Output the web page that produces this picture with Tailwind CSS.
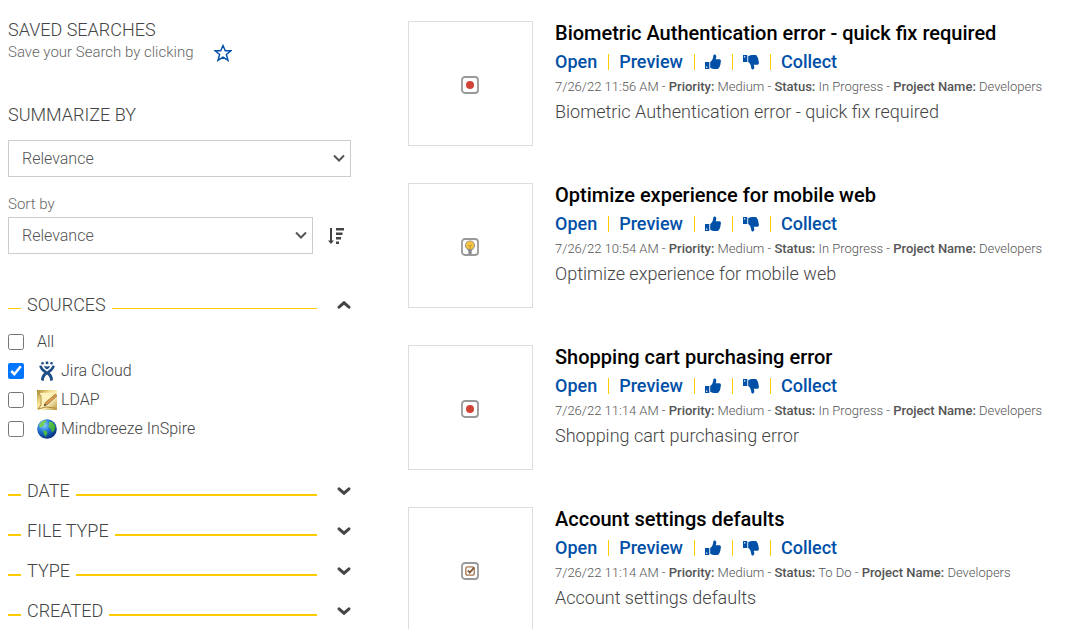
<!DOCTYPE html>
<html lang="en">
  <head>
    <meta charset="UTF-8" />
    <meta name="viewport" content="width=device-width, initial-scale=1.0" />
    <title>Search Results</title>
    <script src="https://cdn.jsdelivr.net/npm/@tailwindcss/browser@4"></script>
  </head>
  <body class="h-screen overflow-hidden bg-white font-['Roboto',sans-serif] font-light text-[#444]">
    <!-- Shared icons -->
    <svg class="hidden" aria-hidden="true">
      <symbol id="thumb" viewBox="0 0 16 16">
        <path fill-rule="evenodd" d="M0 8h4.300v7H0zM1 12.500v1.300h1.300v-1.300z" />
        <path d="M5.200 8C7 7.200 8 4.500 8.200 2.500 8.300.8 9 .3 10 .5c1.800.5 1.500 3 .7 4.800h3.800q1.500.2 1.400 1.700.1 1.200-.4 2 .2 1.500-.5 2.500 0 1.500-1 2.100-.2 1.400-1.500 1.400H9q-1.500 0-3.800-1.200z" />
      </symbol>
      <symbol id="chevron" viewBox="0 0 14 16">
        <path d="M2 5.800l5 4.400 5-4.400" fill="none" stroke="#444" stroke-width="2.900" stroke-linecap="round" />
      </symbol>
      <symbol id="arrow" viewBox="0 0 12 12">
        <path d="M1 3.500l5 5 5-5" fill="none" stroke="#555" stroke-width="2" />
      </symbol>
      <symbol id="bug" viewBox="0 0 18 18">
        <rect x="1" y="1" width="16" height="16" rx="3" fill="#fff" stroke="#999" stroke-width="1.8" />
        <circle cx="9" cy="9" r="4" fill="#d04437" />
      </symbol>
      <symbol id="idea" viewBox="0 0 18 18">
        <rect x="1" y="1" width="16" height="16" rx="3" fill="#fff" stroke="#999" stroke-width="1.8" />
        <path d="M9 2.400a5 5 0 0 0-3 8.900l1.400 1.400V16h3.200v-3.300l1.400-1.400A5 5 0 0 0 9 2.400z" fill="#888" />
        <circle cx="9" cy="7.300" r="4" fill="#f6c342" />
        <path d="M7.300 7.300h.9l.8 1 .8-1h.9M9 8.300v2.600" fill="none" stroke="#b8872a" stroke-width=".8" />
      </symbol>
      <symbol id="task" viewBox="0 0 18 18">
        <rect x="1" y="1" width="16" height="16" rx="3" fill="#fff" stroke="#999" stroke-width="1.8" />
        <rect x="4.800" y="4.800" width="8.400" height="8.400" rx="2" fill="none" stroke="#a5754e" stroke-width="1.300" />
        <path d="M6.800 8.400l2 2.200 4.400-5.200" fill="none" stroke="#815b3a" stroke-width="1.700" />
      </symbol>
    </svg>

    <div class="flex">
      <!-- Sidebar -->
      <aside class="w-1/3 px-2 pt-[18px]">
        <h2 class="text-lg leading-6">SAVED SEARCHES</h2>
        <div class="flex items-center gap-5 text-[15px] leading-5 text-[#666]">
          <p>Save your Search by clicking</p>
          <button class="pt-[2px]" aria-label="Save search">
            <svg class="size-[18px]" viewBox="0 0 24 24" fill="none" stroke="#0050a8" stroke-width="1.900">
              <path d="M12 2l3 7h7.400l-5.900 5 2.200 7.800L12 17.400l-6.700 4.400L7.500 14 1.600 9H9z" />
            </svg>
          </button>
        </div>

        <h2 class="mt-[41px] text-lg leading-6"><label for="summarize">SUMMARIZE BY</label></h2>
        <div class="relative mt-[13px]">
          <select id="summarize" class="block h-[37px] w-full appearance-none border border-[#ccc] bg-white px-[13px] text-base text-[#555]">
            <option>Relevance</option>
          </select>
          <svg class="pointer-events-none absolute top-3 right-[6px] size-3"><use href="#arrow" /></svg>
        </div>

        <label for="sort" class="mt-[17px] block text-[15px] leading-5 text-[#666]">Sort by</label>
        <div class="mt-[3px] flex items-center">
          <div class="relative flex-1">
            <select id="sort" class="block h-[37px] w-full appearance-none border border-[#ccc] bg-white px-[13px] text-base text-[#555]">
              <option>Relevance</option>
            </select>
            <svg class="pointer-events-none absolute top-3 right-[6px] size-3"><use href="#arrow" /></svg>
          </div>
          <button class="mr-[7px] ml-[15px]" aria-label="Sort descending">
            <svg class="size-4" viewBox="0 0 16 16" fill="#444">
              <path d="M2 0h2v12.500h2L3 16 0 12.500h2zM8 0h8v2.500H8zM8 4.500h6.500v2.500H8zM8 9h5v2.500H8zM8 13.500h3V16H8z" />
            </svg>
          </button>
        </div>

        <!-- Open filter group -->
        <h2 class="mt-[39px] text-lg leading-6">
          <button class="flex w-full items-center gap-[6px]" aria-expanded="true">
            <span class="mt-[7px] h-px w-[13px] bg-[#fc0]"></span>
            SOURCES
            <span class="mt-[7px] h-px flex-1 bg-[#fc0]"></span>
            <svg class="ml-[14px] h-4 w-[14px] rotate-180"><use href="#chevron" /></svg>
          </button>
        </h2>
        <ul class="mt-[10px] text-base leading-[29px]">
          <li class="flex items-center">
            <input id="all" type="checkbox" class="mr-[13px] size-4" />
            <label for="all">All</label>
          </li>
          <li class="flex items-center">
            <input id="jira" type="checkbox" class="mr-[13px] size-4" checked />
            <label for="jira" class="flex items-center gap-1">
              <svg class="size-5" viewBox="0 0 20 20" fill="#1f4f86">
                <circle cx="5.500" cy="2.300" r="1.300" /><circle cx="10" cy="1.700" r="1.500" /><circle cx="14.500" cy="2.300" r="1.300" />
                <path d="M2.200 5q1.400-.8 2.600-.2c.6 2.300 2.400 4 5.200 5.600 2.800-1.600 4.600-3.300 5.200-5.600q1.200-.6 2.600.2c-.5 2.900-2.500 5-5.100 6.800 2.100 1.800 3.100 4 3.400 7q-1.300 1.400-2.800 1.100c-.2-3-1.500-5-3.300-6.300-1.800 1.300-3.100 3.300-3.300 6.300q-1.500.3-2.800-1.100c.3-3 1.300-5.200 3.400-7C4.700 10 2.700 7.900 2.200 5z" />
                <path d="M6.800 4.700q3.200 1.500 6.400 0Q12.500 7.200 10 8.600 7.500 7.200 6.800 4.700z" />
              </svg>
              Jira Cloud
            </label>
          </li>
          <li class="flex items-center">
            <input id="ldap" type="checkbox" class="mr-[13px] size-4" />
            <label for="ldap" class="flex items-center gap-1">
              <svg class="size-5" viewBox="0 0 20 20">
                <defs>
                  <linearGradient id="paper" x1="0" y1="0" x2="1" y2="1">
                    <stop offset="0" stop-color="#a88a2c" /><stop offset=".35" stop-color="#f3dc8c" /><stop offset=".6" stop-color="#fff4c4" /><stop offset="1" stop-color="#b8943a" />
                  </linearGradient>
                </defs>
                <path d="M0 0h20v20H0z" fill="url(#paper)" />
                <path d="M3 3l13-.5-3 5-9 9.500z" fill="#fff3bd" />
                <path d="M0 1l4 5v9l-3 4 8-2 9 1" fill="none" stroke="#ad8c34" />
                <path d="M18.500 4l1.500 2-9.500 8.500-3.500 1.500 1.500-3.500z" fill="#d89a4c" stroke="#9a7038" stroke-width=".7" />
                <path d="M7 16l1-2.300 1.300 1.300z" fill="#332" />
              </svg>
              LDAP
            </label>
          </li>
          <li class="flex items-center">
            <input id="inspire" type="checkbox" class="mr-[13px] size-4" />
            <label for="inspire" class="flex items-center gap-1">
              <svg class="size-5" viewBox="0 0 20 20">
                <defs>
                  <radialGradient id="sea" cx=".35" cy=".3" r=".75">
                    <stop offset="0" stop-color="#8fd4ff" /><stop offset=".45" stop-color="#2278d6" /><stop offset="1" stop-color="#062a78" />
                  </radialGradient>
                  <linearGradient id="land" x1="0" y1="0" x2="1" y2="1">
                    <stop offset="0" stop-color="#8ee060" /><stop offset="1" stop-color="#1e9a2c" />
                  </linearGradient>
                </defs>
                <circle cx="10" cy="10" r="9.800" fill="url(#sea)" />
                <path d="M2 6Q4 2.500 8 1l1.500 1.500L7 4.500l1 1.500-3 1.500L3 9zM6 11.500l3.500.5 1 2-2 4-1.500-3zM12 2.500l3.500.8 3 4-1 4.200-2.500 2-1.500-4-2-1.500.5-3z" fill="url(#land)" />
              </svg>
              Mindbreeze InSpire
            </label>
          </li>
        </ul>

        <!-- Closed filter groups -->
        <div class="mt-7 text-lg leading-10">
          <h2>
            <button class="flex w-full items-center gap-[6px]" aria-expanded="false">
              <span class="mt-2 h-[2px] w-[13px] bg-[#fc0]"></span>
              DATE
              <span class="mt-2 h-[2px] flex-1 bg-[#fc0]"></span>
              <svg class="ml-[14px] h-4 w-[14px]"><use href="#chevron" /></svg>
            </button>
          </h2>
          <h2>
            <button class="flex w-full items-center gap-[6px]" aria-expanded="false">
              <span class="mt-2 h-[2px] w-[13px] bg-[#fc0]"></span>
              FILE TYPE
              <span class="mt-2 h-[2px] flex-1 bg-[#fc0]"></span>
              <svg class="ml-[14px] h-4 w-[14px]"><use href="#chevron" /></svg>
            </button>
          </h2>
          <h2>
            <button class="flex w-full items-center gap-[6px]" aria-expanded="false">
              <span class="mt-2 h-[2px] w-[13px] bg-[#fc0]"></span>
              TYPE
              <span class="mt-2 h-[2px] flex-1 bg-[#fc0]"></span>
              <svg class="ml-[14px] h-4 w-[14px]"><use href="#chevron" /></svg>
            </button>
          </h2>
          <h2>
            <button class="flex w-full items-center gap-[6px]" aria-expanded="false">
              <span class="mt-2 h-[2px] w-[13px] bg-[#fc0]"></span>
              CREATED
              <span class="mt-2 h-[2px] flex-1 bg-[#fc0]"></span>
              <svg class="ml-[14px] h-4 w-[14px]"><use href="#chevron" /></svg>
            </button>
          </h2>
        </div>
      </aside>

      <!-- Results -->
      <main class="flex flex-1 flex-col gap-[37px] pt-[21px] pl-[49px]">
        <article class="flex gap-[22px]">
          <div class="flex size-[125px] shrink-0 items-center justify-center border border-[#ddd] pt-[3px] pr-px">
            <svg class="size-[18px]"><use href="#bug" /></svg>
          </div>
          <div>
            <h3 class="text-xl leading-6 font-medium text-black">Biometric Authentication error - quick fix required</h3>
            <div class="mt-1 flex items-center gap-[10px] text-lg leading-[26px] font-medium text-[#0050a8]">
              <a href="#">Open</a>
              <span class="ml-px h-4 w-px bg-[#fc0]"></span>
              <a href="#">Preview</a>
              <span class="ml-px h-4 w-px bg-[#fc0]"></span>
              <button aria-label="Like"><svg class="size-4 fill-current"><use href="#thumb" /></svg></button>
              <span class="ml-px h-4 w-px bg-[#fc0]"></span>
              <button aria-label="Dislike"><svg class="size-4 -scale-y-100 fill-current"><use href="#thumb" /></svg></button>
              <span class="ml-px h-4 w-px bg-[#fc0]"></span>
              <a href="#">Collect</a>
            </div>
            <p class="mt-[2px] text-[13px] leading-5 text-[#555]">7/26/22 11:56 AM - <b class="font-medium">Priority:</b> Medium - <b class="font-medium">Status:</b> In Progress - <b class="font-medium">Project Name:</b> Developers</p>
            <p class="mt-[3px] text-lg leading-6">Biometric Authentication error - quick fix required</p>
          </div>
        </article>

        <article class="flex gap-[22px]">
          <div class="flex size-[125px] shrink-0 items-center justify-center border border-[#ddd] pt-[3px] pr-px">
            <svg class="size-[18px]"><use href="#idea" /></svg>
          </div>
          <div>
            <h3 class="text-xl leading-6 font-medium text-black">Optimize experience for mobile web</h3>
            <div class="mt-1 flex items-center gap-[10px] text-lg leading-[26px] font-medium text-[#0050a8]">
              <a href="#">Open</a>
              <span class="ml-px h-4 w-px bg-[#fc0]"></span>
              <a href="#">Preview</a>
              <span class="ml-px h-4 w-px bg-[#fc0]"></span>
              <button aria-label="Like"><svg class="size-4 fill-current"><use href="#thumb" /></svg></button>
              <span class="ml-px h-4 w-px bg-[#fc0]"></span>
              <button aria-label="Dislike"><svg class="size-4 -scale-y-100 fill-current"><use href="#thumb" /></svg></button>
              <span class="ml-px h-4 w-px bg-[#fc0]"></span>
              <a href="#">Collect</a>
            </div>
            <p class="mt-[2px] text-[13px] leading-5 text-[#555]">7/26/22 10:54 AM - <b class="font-medium">Priority:</b> Medium - <b class="font-medium">Status:</b> In Progress - <b class="font-medium">Project Name:</b> Developers</p>
            <p class="mt-[3px] text-lg leading-6">Optimize experience for mobile web</p>
          </div>
        </article>

        <article class="flex gap-[22px]">
          <div class="flex size-[125px] shrink-0 items-center justify-center border border-[#ddd] pt-[3px] pr-px">
            <svg class="size-[18px]"><use href="#bug" /></svg>
          </div>
          <div>
            <h3 class="text-xl leading-6 font-medium text-black">Shopping cart purchasing error</h3>
            <div class="mt-1 flex items-center gap-[10px] text-lg leading-[26px] font-medium text-[#0050a8]">
              <a href="#">Open</a>
              <span class="ml-px h-4 w-px bg-[#fc0]"></span>
              <a href="#">Preview</a>
              <span class="ml-px h-4 w-px bg-[#fc0]"></span>
              <button aria-label="Like"><svg class="size-4 fill-current"><use href="#thumb" /></svg></button>
              <span class="ml-px h-4 w-px bg-[#fc0]"></span>
              <button aria-label="Dislike"><svg class="size-4 -scale-y-100 fill-current"><use href="#thumb" /></svg></button>
              <span class="ml-px h-4 w-px bg-[#fc0]"></span>
              <a href="#">Collect</a>
            </div>
            <p class="mt-[2px] text-[13px] leading-5 text-[#555]">7/26/22 11:14 AM - <b class="font-medium">Priority:</b> Medium - <b class="font-medium">Status:</b> In Progress - <b class="font-medium">Project Name:</b> Developers</p>
            <p class="mt-[3px] text-lg leading-6">Shopping cart purchasing error</p>
          </div>
        </article>

        <article class="flex gap-[22px]">
          <div class="flex size-[125px] shrink-0 items-center justify-center border border-[#ddd] pt-[3px] pr-px">
            <svg class="size-[18px]"><use href="#task" /></svg>
          </div>
          <div>
            <h3 class="text-xl leading-6 font-medium text-black">Account settings defaults</h3>
            <div class="mt-1 flex items-center gap-[10px] text-lg leading-[26px] font-medium text-[#0050a8]">
              <a href="#">Open</a>
              <span class="ml-px h-4 w-px bg-[#fc0]"></span>
              <a href="#">Preview</a>
              <span class="ml-px h-4 w-px bg-[#fc0]"></span>
              <button aria-label="Like"><svg class="size-4 fill-current"><use href="#thumb" /></svg></button>
              <span class="ml-px h-4 w-px bg-[#fc0]"></span>
              <button aria-label="Dislike"><svg class="size-4 -scale-y-100 fill-current"><use href="#thumb" /></svg></button>
              <span class="ml-px h-4 w-px bg-[#fc0]"></span>
              <a href="#">Collect</a>
            </div>
            <p class="mt-[2px] text-[13px] leading-5 text-[#555]">7/26/22 11:14 AM - <b class="font-medium">Priority:</b> Medium - <b class="font-medium">Status:</b> To Do - <b class="font-medium">Project Name:</b> Developers</p>
            <p class="mt-[3px] text-lg leading-6">Account settings defaults</p>
          </div>
        </article>
      </main>
    </div>
  </body>
</html>
